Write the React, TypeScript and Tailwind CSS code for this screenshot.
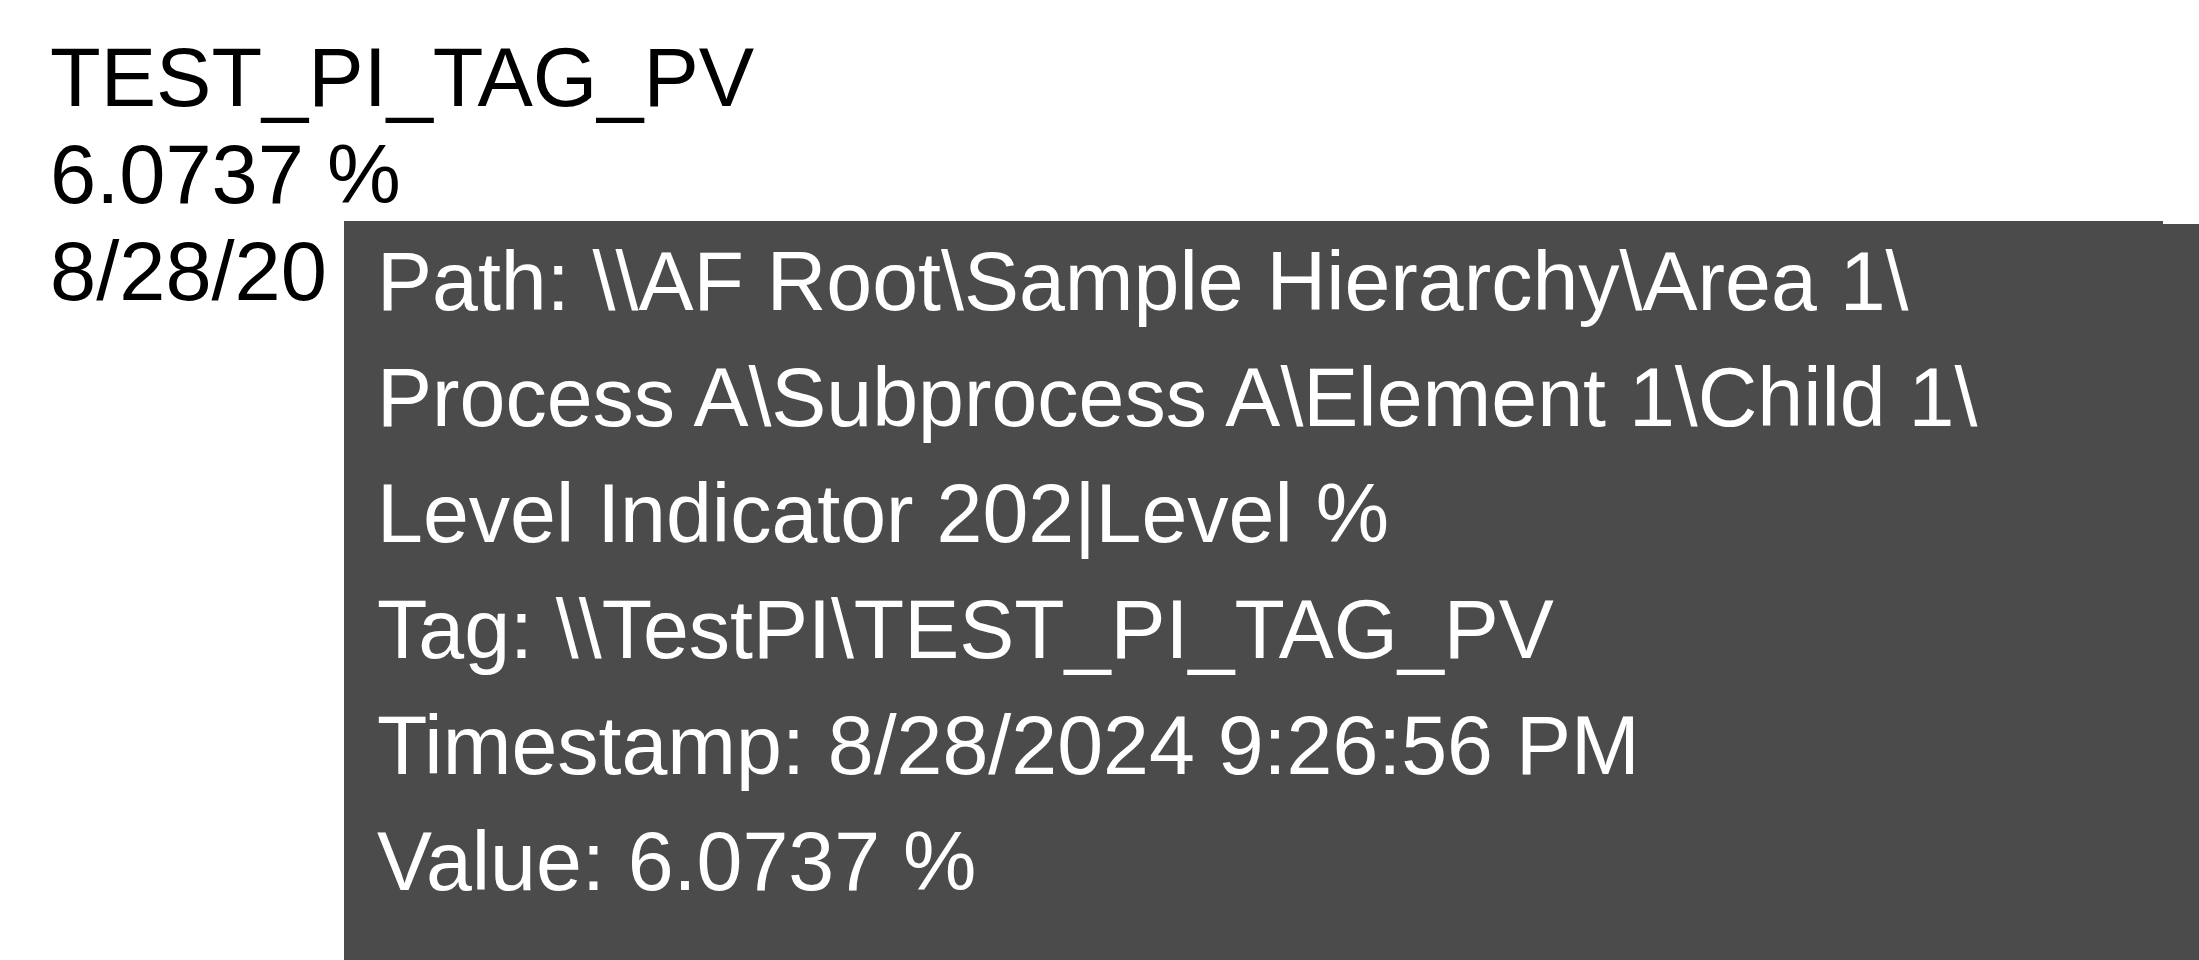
const lines = [
  'Path: \\\\AF Root\\Sample Hierarchy\\Area 1\\',
  'Process A\\Subprocess A\\Element 1\\Child 1\\',
  'Level Indicator 202|Level %',
  'Tag: \\\\TestPI\\TEST_PI_TAG_PV',
  'Timestamp: 8/28/2024 9:26:56 PM',
  'Value: 6.0737 %',
];

const App = () => {
  return (
    <div className="relative h-[960px] w-full overflow-hidden bg-white font-['Liberation_Sans',Arial,sans-serif]">
      {/* Tag card */}
      <div className="pl-[50px] pt-[29px] text-[83px] leading-[97px] text-black whitespace-nowrap">
        <div>TEST_PI_TAG_PV</div>
        <div>6.0737 %</div>
        <div>8/28/2024 9:26:56 PM</div>
      </div>

      {/* Tooltip */}
      <div className="absolute left-[324px] top-[221px] h-[800px] w-[1920px] border-l-[20px] border-white bg-[#4b4b4b] pl-[33px] pt-[2px] text-[82.5px] leading-[116px] text-white whitespace-nowrap">
        {lines.map((line) => (
          <div key={line}>{line}</div>
        ))}
        <div className="absolute left-[1819px] top-0 h-[3px] w-[80px] bg-white"></div>
      </div>
    </div>
  );
};

export default App;
